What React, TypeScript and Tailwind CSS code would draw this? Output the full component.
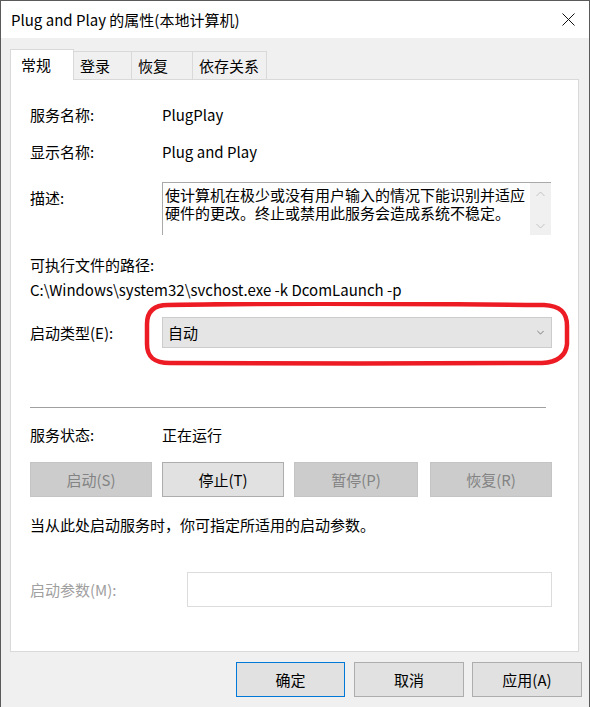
import React from 'react';

const Chevron: React.FC<{ up?: boolean; className?: string }> = ({ up, className }) => (
    <svg width="9" height="6" viewBox="0 0 9 6" className={className}>
        <polyline
            points={up ? '0.5,5 4.5,1 8.5,5' : '0.5,1 4.5,5 8.5,1'}
            fill="none"
            stroke="currentColor"
            strokeWidth="1"
        />
    </svg>
);

const Tab: React.FC<{ label: string; width: string; active?: boolean }> = ({ label, width, active }) => (
    <div
        className={
            active
                ? `${width} h-[31px] -mb-px relative z-10 bg-white border border-b-0 border-[#d9d9d9] pl-[10px] flex items-center`
                : `${width} h-[28px] bg-[#f0f0f0] border-t border-r border-[#d9d9d9] pl-[6px] flex items-center`
        }
    >
        {label}
    </div>
);

const App: React.FC = () => {
    return (
        <div className="relative w-[590px] h-[707px] overflow-hidden bg-[#f0f0f0] border-t border-x border-[#5a5a5a] text-[15px] leading-[20px] text-black font-['Noto_Sans_CJK_SC',sans-serif]">
            {/* title bar */}
            <div className="h-[37px] bg-white flex items-center justify-between pl-[10px] pr-[14px]">
                <span>Plug and Play 的属性(本地计算机)</span>
                <svg width="13" height="13" viewBox="0 0 13 13">
                    <line x1="0.5" y1="0.5" x2="12.5" y2="12.5" stroke="#111" strokeWidth="1" />
                    <line x1="12.5" y1="0.5" x2="0.5" y2="12.5" stroke="#111" strokeWidth="1" />
                </svg>
            </div>

            {/* tabs */}
            <div className="mt-[11px] h-[30px] flex items-end pl-[9px]">
                <Tab label="常规" width="w-[64px]" active />
                <Tab label="登录" width="w-[58px]" />
                <Tab label="恢复" width="w-[61px]" />
                <Tab label="依存关系" width="w-[74px]" />
            </div>

            {/* panel */}
            <div className="ml-[9px] w-[569px] h-[573px] bg-white border border-[#d9d9d9] pl-[19px] flex flex-col">
                <div className="mt-[25px] h-[20px] flex">
                    <div className="w-[132px]">服务名称:</div>
                    <div>PlugPlay</div>
                </div>
                <div className="mt-[17px] h-[20px] flex">
                    <div className="w-[132px]">显示名称:</div>
                    <div>Plug and Play</div>
                </div>
                <div className="mt-[20px] h-[53px] flex">
                    <div className="w-[132px] mt-[6px]">描述:</div>
                    <div className="w-[389px] h-[53px] border-t border-l border-[#a9a9a9] flex">
                        <div className="flex-1 pl-[2px] pt-[3px] leading-[18px]">
                            使计算机在极少或没有用户输入的情况下能识别并适应硬件的更改。终止或禁用此服务会造成系统不稳定。
                        </div>
                        <div className="w-[21px] bg-[#f0f0f0] flex flex-col items-center justify-between pt-[8px] pb-[6px] text-[#c2c2c2]">
                            <Chevron up />
                            <Chevron />
                        </div>
                    </div>
                </div>
                <div className="mt-[20px] h-[20px]">可执行文件的路径:</div>
                <div className="mt-[5px] h-[20px]">C:\Windows\system32\svchost.exe -k DcomLaunch -p</div>
                <div className="mt-[17px] h-[31px] flex items-center">
                    <div className="w-[132px]">启动类型(E):</div>
                    <div className="w-[390px] h-[31px] bg-[#e5e5e5] border border-[#cccccc] flex items-center justify-between pl-[5px] pr-[7px]">
                        <span>自动</span>
                        <Chevron className="text-[#606060] w-[7px] h-[5px]" />
                    </div>
                </div>
                <div className="mt-[59px] w-[516px] h-px bg-[#a0a0a0]" />
                <div className="mt-[17px] h-[20px] flex">
                    <div className="w-[132px]">服务状态:</div>
                    <div>正在运行</div>
                </div>
                <div className="mt-[17px] h-[35px] flex">
                    <div className="w-[122px] h-[35px] bg-[#cccccc] border border-[#c4c4c4] text-[#838383] flex items-center justify-center">启动(S)</div>
                    <div className="ml-[10px] w-[122px] h-[35px] bg-[#e1e1e1] border border-[#adadad] flex items-center justify-center">停止(T)</div>
                    <div className="ml-[10px] w-[124px] h-[35px] bg-[#cccccc] border border-[#c4c4c4] text-[#838383] flex items-center justify-center">暂停(P)</div>
                    <div className="ml-[12px] w-[122px] h-[35px] bg-[#cccccc] border border-[#c4c4c4] text-[#838383] flex items-center justify-center">恢复(R)</div>
                </div>
                <div className="mt-[18px] h-[20px]">当从此处启动服务时，你可指定所适用的启动参数。</div>
                <div className="mt-[37px] h-[35px] flex items-center">
                    <div className="w-[157px] text-[#a0a0a0]">启动参数(M):</div>
                    <div className="w-[365px] h-[35px] bg-white border border-[#dcdcdc]" />
                </div>
            </div>

            {/* dialog buttons */}
            <div className="mt-[10px] flex pl-[235px]">
                <div className="w-[109px] h-[35px] bg-[#e1e1e1] border border-[#0078d7] flex items-center justify-center">确定</div>
                <div className="ml-[9px] w-[110px] h-[35px] bg-[#e1e1e1] border border-[#adadad] flex items-center justify-center">取消</div>
                <div className="ml-[8px] w-[110px] h-[35px] bg-[#e1e1e1] border border-[#adadad] flex items-center justify-center">应用(A)</div>
            </div>

            {/* red annotation around startup type */}
            <svg className="absolute left-[143px] top-[301px] pointer-events-none" width="426" height="64" viewBox="0 0 426 64">
                <path
                    d="M24 3 C120 1 300 2 400 3 C416 4 423 10 423 24 L423 42 C422 54 414 60 398 61 C300 62 120 61 26 61 C10 61 3 55 3 42 L3 22 C3 9 10 3 24 3 Z"
                    fill="none"
                    stroke="#ed1c24"
                    strokeWidth="4.5"
                />
            </svg>
        </div>
    );
};

export default App;
